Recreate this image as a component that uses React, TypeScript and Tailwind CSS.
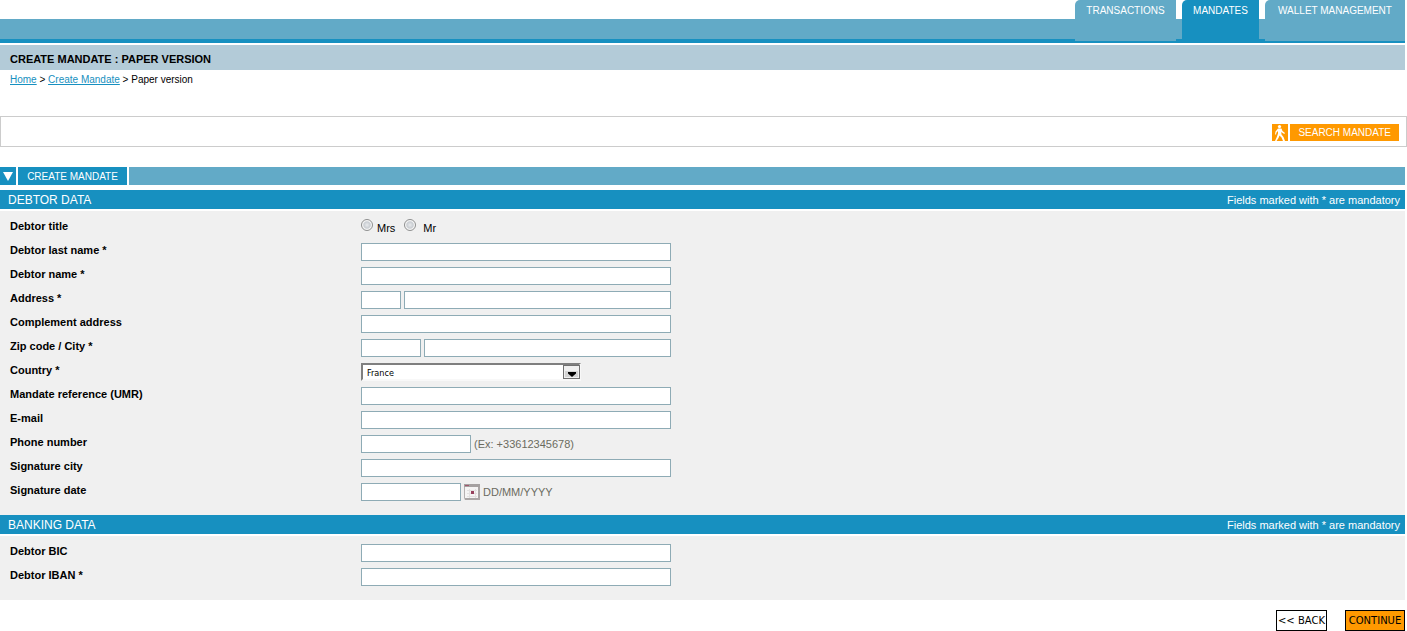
import type { ReactNode } from 'react';

const inputClass = 'h-[18px] border border-[#8eabb5] bg-white px-1 text-[11px] outline-none';

const tabs = [
  { label: 'TRANSACTIONS', className: 'h-[41px] w-[101px] bg-[#62aac7]' },
  { label: 'MANDATES', className: 'h-[43px] w-[77px] bg-[#1790c0]' },
  { label: 'WALLET MANAGEMENT', className: 'h-[41px] w-[140px] bg-[#62aac7]' },
];

interface RowProps {
  id: string;
  label: string;
  required?: boolean;
  children?: ReactNode;
}

function Row({ id, label, required, children }: RowProps) {
  return (
    <div className="flex h-6 items-start">
      <label htmlFor={id} className="w-[361px] shrink-0 pl-[10px] font-bold leading-[18px]">
        {label}
        {required && ' *'}
      </label>
      <div className="flex items-center gap-[3px] pt-[2px]">
        {children ?? <input id={id} type="text" className={`${inputClass} w-[310px]`} />}
      </div>
    </div>
  );
}

function Section({ title, children }: { title: string; children: ReactNode }) {
  return (
    <section>
      <div className="flex h-[19px] justify-between bg-[#1790c0] pl-2 pr-[5px] leading-[20px] text-white">
        <h2 className="text-[12px]">{title}</h2>
        <span className="text-[11px]">Fields marked with * are mandatory</span>
      </div>
      <div className="mt-[2px] bg-[#f0f0f0] pb-[10px] pt-[6px] text-[11px]">{children}</div>
    </section>
  );
}

function WalkerIcon() {
  return (
    <svg width="16" height="17" viewBox="0 0 16 17" fill="white" aria-hidden="true">
      <circle cx="7.5" cy="2.6" r="1.6" />
      <path d="M6 4.500h3.500l1 2.500 2.500 2-.8 1-3-2 .3 2.500 2 2.500 1.500 4h-2l-1.500-3.500-2-2L6.500 14l-2 3H3l1.800-4L6 9.500V7L4.500 8.500 4 10.500H3l.5-3z" />
    </svg>
  );
}

function CalendarIcon() {
  return (
    <svg width="16" height="16" viewBox="0 0 16 16" aria-hidden="true">
      <rect x="0.5" y="0.5" width="15" height="15" rx="1" fill="#f5f4f4" stroke="#b5b1b1" />
      <path d="M0 0h16v3H0z" fill="#a5a1a1" />
      <path d="M1 1.5h4" stroke="#a0566c" />
      <path d="M3 6.5h10M3 9.5h10M3 12.5h10M5.5 5v9M11.5 5v9" stroke="#e2e0e0" />
      <rect x="7" y="7" width="3" height="3" fill="#96405c" />
      <path d="M1 15h15M15 3v13" stroke="#aaa6a6" strokeWidth="2" />
    </svg>
  );
}

function Radio({ id, value }: { id: string; value: string }) {
  return (
    <input
      type="radio"
      id={id}
      name="title"
      value={value}
      className="size-3 appearance-none rounded-full border border-[#8e8f8f] bg-[radial-gradient(circle,#e8eaec_0,#c9cdd2_45%,#f6f6f6_62%)] checked:bg-[radial-gradient(circle,#1790c0_45%,#f6f6f6_50%)]"
    />
  );
}

function App() {
  return (
    <div className="bg-white font-['Liberation_Sans',Arial,sans-serif] text-[11px] text-black">
      <header className="mr-[2px] flex h-[43px] justify-end gap-[6px] bg-[linear-gradient(to_bottom,white_19px,#62aac7_19px,#62aac7_39px,#1790c0_39px)]">
        {tabs.map((tab) => (
          <a
            key={tab.label}
            href="#"
            className={`rounded-tl-[5px] pt-[3px] text-center text-[10px] leading-[16px] text-white ${tab.className}`}
          >
            {tab.label}
          </a>
        ))}
      </header>

      <h1 className="mr-[2px] mt-[2px] h-[25px] bg-[#b3cbd8] pl-[10px] pt-px text-[11px] font-bold leading-[26px]">
        CREATE MANDATE : PAPER VERSION
      </h1>
      <nav className="h-[46px] pl-[10px] text-[10px] leading-[20px]">
        <a href="#" className="text-[#1790c0] underline">Home</a> &gt;{' '}
        <a href="#" className="text-[#1790c0] underline">Create Mandate</a> &gt; Paper version
      </nav>

      <div className="flex h-[31px] items-start justify-end border border-[#ccc] pr-[7px] pt-[7px]">
        <button type="button" className="flex gap-[2px] text-[10px] text-white">
          <span className="bg-[#ff9900]"><WalkerIcon /></span>
          <span className="h-[17px] bg-[#ff9900] px-2 leading-[17px]">SEARCH MANDATE</span>
        </button>
      </div>

      <main className="mr-[2px] mt-5">
        <div className="mb-[5px] flex h-[18px] gap-[2px] text-[10px] leading-[19px] text-white">
          <span className="flex w-4 items-center justify-center bg-[#1790c0]">
            <svg width="10" height="9" viewBox="0 0 10 9" fill="white" aria-hidden="true">
              <path d="M0 0h10L5 9z" />
            </svg>
          </span>
          <span className="w-[109px] bg-[#1790c0] text-center">CREATE MANDATE</span>
          <span className="flex-1 bg-[#62aac7]" />
        </div>

        <form onSubmit={(e) => e.preventDefault()}>
          <Section title="DEBTOR DATA">
            <Row id="title-mrs" label="Debtor title">
              <div className="flex items-start">
                <Radio id="title-mrs" value="mrs" />
                <label htmlFor="title-mrs" className="ml-1 mr-[9px] leading-[18px]">Mrs</label>
                <Radio id="title-mr" value="mr" />
                <label htmlFor="title-mr" className="ml-[7px] leading-[18px]">Mr</label>
              </div>
            </Row>
            <Row id="last-name" label="Debtor last name" required />
            <Row id="name" label="Debtor name" required />
            <Row id="street-number" label="Address" required>
              <input id="street-number" type="text" className={`${inputClass} w-10`} />
              <input type="text" aria-label="Street" className={`${inputClass} w-[267px]`} />
            </Row>
            <Row id="complement" label="Complement address" />
            <Row id="zip" label="Zip code / City" required>
              <input id="zip" type="text" className={`${inputClass} w-[60px]`} />
              <input type="text" aria-label="City" className={`${inputClass} w-[247px]`} />
            </Row>
            <Row id="country" label="Country" required>
              <div className="relative">
                <select
                  id="country"
                  className="block h-[18px] w-[220px] appearance-none border-2 border-b-[#f8f8f8] border-l-[#7f7f7f] border-r-[#f8f8f8] border-t-[#7f7f7f] bg-white px-1 pt-[2px] font-['DejaVu_Sans_Condensed','DejaVu_Sans',sans-serif] text-[9px] outline-none"
                >
                  <option>France</option>
                </select>
                <svg
                  className="pointer-events-none absolute right-px top-[2px]"
                  width="17"
                  height="14"
                  viewBox="0 0 17 14"
                  aria-hidden="true"
                >
                  <rect x="0.5" y="0.5" width="16" height="13" fill="#f0f0f0" stroke="#707070" />
                  <path d="M2 6h13v6H2z" fill="#d4d4d4" />
                  <path d="M5 7h8v1.500L9 12 5 8.500z" fill="black" />
                </svg>
              </div>
            </Row>
            <Row id="umr" label="Mandate reference (UMR)" />
            <Row id="email" label="E-mail" />
            <Row id="phone" label="Phone number">
              <input id="phone" type="text" className={`${inputClass} w-[110px]`} />
              <span className="text-[#6b6b5f]">(Ex: +33612345678)</span>
            </Row>
            <Row id="sign-city" label="Signature city" />
            <Row id="sign-date" label="Signature date">
              <input id="sign-date" type="text" className={`${inputClass} w-[100px]`} />
              <button type="button" aria-label="Pick a date"><CalendarIcon /></button>
              <span className="text-[#6b6b5f]">DD/MM/YYYY</span>
            </Row>
          </Section>

          <Section title="BANKING DATA">
            <Row id="bic" label="Debtor BIC" />
            <Row id="iban" label="Debtor IBAN" required />
          </Section>

          <div className="flex justify-end gap-[18px] pt-[10px] font-['DejaVu_Sans',Verdana,sans-serif] text-[10px]">
            <button type="button" className="h-[21px] w-[51px] whitespace-nowrap border border-black bg-white">&lt;&lt; BACK</button>
            <button type="submit" className="h-[21px] w-[60px] border border-black bg-[#ff9900]">CONTINUE</button>
          </div>
        </form>
      </main>
    </div>
  );
}

export default App;
